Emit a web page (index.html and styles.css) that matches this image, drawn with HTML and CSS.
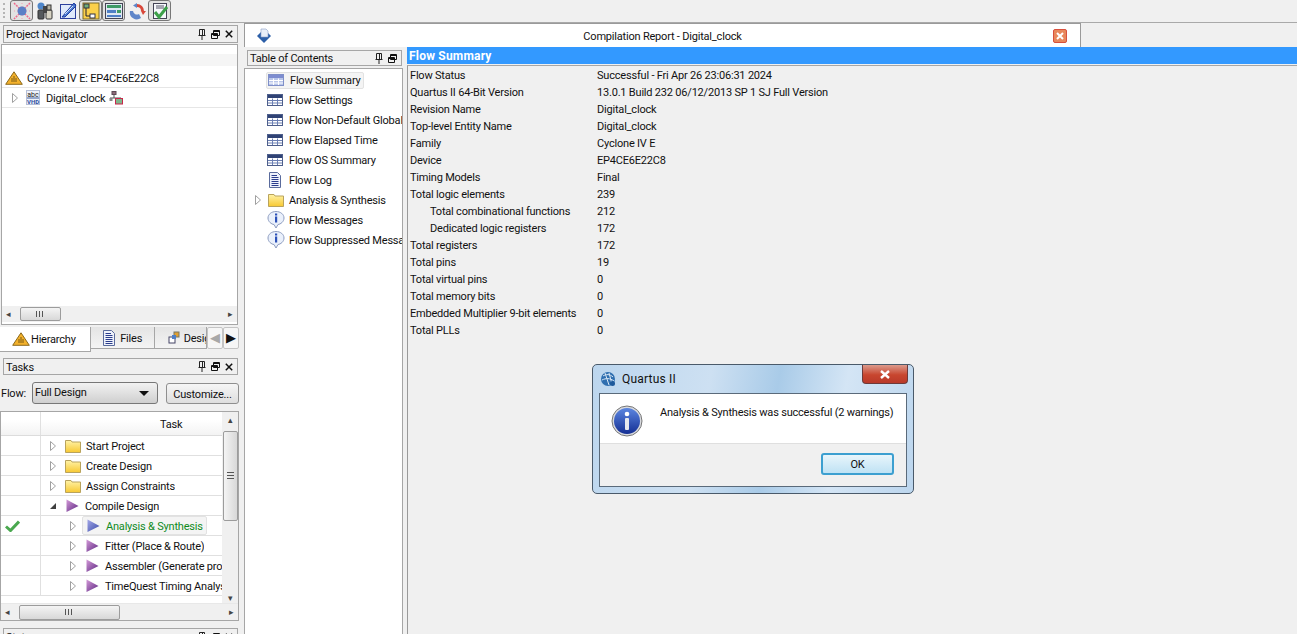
FILE: index.html
```html
<!DOCTYPE html>
<html lang="en">
<head>
    <meta charset="UTF-8">
    <title>Quartus II - Compilation Report</title>
    <link rel="stylesheet" href="styles.css">
</head>
<body>
    <svg class="defs" width="0" height="0">
        <defs>
            <linearGradient id="gFolder" x1="0" y1="0" x2="0" y2="1"><stop offset="0" stop-color="#fff3a8"/><stop offset="1" stop-color="#f7c832"/></linearGradient>
            <linearGradient id="gPlay" x1="0" y1="0" x2="1" y2="1"><stop offset="0" stop-color="#d49ad8"/><stop offset="1" stop-color="#5a2480"/></linearGradient>
            <linearGradient id="gPlayBlue" x1="0" y1="0" x2="1" y2="1"><stop offset="0" stop-color="#a3a8e8"/><stop offset="1" stop-color="#3a4aa8"/></linearGradient>
            <linearGradient id="gInfo" x1="0" y1="0" x2="0" y2="1"><stop offset="0" stop-color="#5c86e0"/><stop offset="1" stop-color="#142f94"/></linearGradient>
            <symbol id="i-exp" viewBox="0 0 8 10"><path d="M1.500 .5 6.500 5 1.500 9.500z" fill="#fff" stroke="#a0a0a0"/></symbol>
            <symbol id="i-exp-open" viewBox="0 0 8 10"><path d="M1 8 7 8 7 2z" fill="#404040"/></symbol>
            <symbol id="i-folder" viewBox="0 0 16 14"><path d="M.5 3V1.500H6L7 3H15.500V13.500H.5z" fill="url(#gFolder)" stroke="#b9a35c"/></symbol>
            <symbol id="i-play" viewBox="0 0 14 14"><path d="M1.500 .5 13.500 7 1.500 13z" fill="url(#gPlay)"/></symbol>
            <symbol id="i-play-blue" viewBox="0 0 14 14"><path d="M1.500 .5 13.500 7 1.500 13z" fill="url(#gPlayBlue)"/></symbol>
            <symbol id="i-table" viewBox="0 0 16 12">
                <rect x=".5" y=".5" width="15" height="11" fill="#fff" stroke="#4e5f8c"/>
                <rect x="1" y="1" width="14" height="3" fill="#2f4274"/>
                <path d="M1 6.500H15M1 9H15M5.500 4.500V11M10.500 4.500V11" stroke="#6d80b4"/>
            </symbol>
            <symbol id="i-table-sel" viewBox="0 0 16 12">
                <rect x=".5" y=".5" width="15" height="11" fill="#b9c6ea" stroke="#7f8fc8"/>
                <rect x="1" y="1" width="14" height="3" fill="#7d8cd0"/>
                <path d="M1 6.500H15M1 9H15M5.500 4.500V11M10.500 4.500V11" stroke="#fff"/>
            </symbol>
            <symbol id="i-doc" viewBox="0 0 12 16">
                <path d="M.5 .5H8.500L11.500 3.500V15.500H.5z" fill="#eef2fb" stroke="#5a6b9c"/>
                <path d="M2.500 3.500H8M2.500 5.500H9.500M2.500 7.500H9.500M2.500 9.500H9.500M2.500 11.500H9.500M2.500 13.500H9.500" stroke="#2a3c8c"/>
            </symbol>
            <symbol id="i-info" viewBox="0 0 18 18">
                <path d="M9 .5C13.500 .5 17 3.300 17 7S13.500 13.300 11 13.500L9 17 7 13.500C4.500 13.300 1 10.700 1 7S4.500 .5 9 .5z" fill="#eaf0fb" stroke="#8d9cc0"/>
                <rect x="8" y="2.500" width="2.200" height="2" fill="#2c50b8"/>
                <rect x="8" y="5.500" width="2.200" height="6" fill="#2c50b8"/>
            </symbol>
            <symbol id="i-warn" viewBox="0 0 18 14">
                <path d="M9 .8 17.300 13.300H.7z" fill="#f3b12b" stroke="#8c6a1d"/>
                <path d="M7 11V7M9 11V5M11 11V7" stroke="#7a5a14"/>
            </symbol>
            <symbol id="i-pin" viewBox="0 0 8 11"><path d="M1.500 .5H6.500V6.500H1.500zM.5 6.500H7.500M4 7V11M4.500 1V6" fill="none" stroke="#222"/></symbol>
            <symbol id="i-float" viewBox="0 0 9 9"><path d="M2.500 .5H8.500V5.500H2.500zM2.500 1.500H8.500M.5 3.500H6.500V8.500H.5zM.5 4.500H6.500" fill="#f0f0f0" stroke="#111"/></symbol>
            <symbol id="i-close" viewBox="0 0 8 8"><path d="M.8 .8 7.200 7.200M7.200 .8 .8 7.200" stroke="#111" stroke-width="1.500"/></symbol>
        </defs>
    </svg>

    <div class="toolbar">
        <span class="grip"></span>
        <span class="tool tool-on">
            <svg width="18" height="18" viewBox="0 0 18 18"><path d="M1 1 17 17M17 1 1 17" stroke="#ef6a8c" stroke-width="1.500" stroke-dasharray="2 1"/><path d="M9 1V17M1 9H17" stroke="#f4a0b4" stroke-dasharray="1 2"/><circle cx="9" cy="9" r="4.500" fill="#5b7fc6"/></svg>
        </span>
        <span class="tool">
            <svg width="18" height="18" viewBox="0 0 18 18"><circle cx="5" cy="4" r="3.500" fill="#4f86c9"/><rect x="2" y="8" width="6" height="9" rx="1" fill="#55595c" stroke="#333"/><rect x="10" y="8" width="6" height="9" rx="1" fill="#d8d4c4" stroke="#333"/><rect x="7" y="4" width="4" height="7" fill="#444"/><rect x="11" y="3" width="4" height="5" fill="#b8b4a4" stroke="#333"/></svg>
        </span>
        <span class="tool">
            <svg width="18" height="18" viewBox="0 0 18 18"><rect x="1.500" y="2.500" width="15" height="14" fill="#dfe9fa" stroke="#2b3f9c"/><path d="M3 15 15 1 17 4 6 15z" fill="#4d7cd0" stroke="#1d3aa0"/><path d="M6 12 14 4" stroke="#cfe0fa"/></svg>
        </span>
        <span class="tool tool-on">
            <svg width="18" height="18" viewBox="0 0 18 18"><rect x="1" y="1" width="16" height="16" fill="#fbd04a" stroke="#7a6a28"/><rect x="2" y="2" width="5" height="4" fill="#6fae78" stroke="#334"/><rect x="8" y="12" width="5" height="4" fill="#fff" stroke="#334"/><path d="M4 6V14H8" fill="none" stroke="#223"/></svg>
        </span>
        <span class="tool tool-on">
            <svg width="18" height="18" viewBox="0 0 18 18"><rect x=".5" y="1.500" width="17" height="15" fill="#dfe8f2" stroke="#445"/><rect x="2" y="3" width="14" height="3" fill="#3f9a66"/><rect x="2" y="8" width="9" height="3" fill="#4f7fc6"/><rect x="12" y="8" width="4" height="3" fill="#3f9a66"/><rect x="2" y="13" width="14" height="2" fill="#4f7fc6"/></svg>
        </span>
        <span class="tool">
            <svg width="18" height="18" viewBox="0 0 18 18"><path d="M9 2A7 7 0 0 1 16 9L13 9A4 4 0 0 0 9 5z" fill="#d9483b"/><path d="M13 16A7 7 0 0 1 2 9L5 9A4 4 0 0 0 11 12z" fill="#5f86c9"/><path d="M9 1 5 3.500 9 6z" fill="#5f86c9"/><path d="M13 9H18L15 13z" fill="#d9483b"/></svg>
        </span>
        <span class="tool tool-on">
            <svg width="18" height="18" viewBox="0 0 18 18"><rect x="2.500" y="1.500" width="13" height="15" fill="#f6f8fc" stroke="#445"/><path d="M5 4H13M5 6H13" stroke="#556"/><path d="M4 10 8 15 16 5" fill="none" stroke="#3da04a" stroke-width="3"/></svg>
        </span>
    </div>

    <div class="workspace">
        <aside class="side">
            <div class="dock-head nav-head">
                <span class="dock-title">Project Navigator</span>
                <span class="dock-btns">
                    <svg class="pin"><use href="#i-pin"/></svg>
                    <svg class="flt"><use href="#i-float"/></svg>
                    <svg class="cls"><use href="#i-close"/></svg>
                </span>
            </div>
            <div class="nav-box">
                <div class="nav-strip"></div>
                <div class="nav-row nav-device">
                    <svg class="warn"><use href="#i-warn"/></svg>
                    <span class="lbl">Cyclone IV E: EP4CE6E22C8</span>
                </div>
                <div class="nav-row nav-entity">
                    <svg class="exp"><use href="#i-exp"/></svg>
                    <svg class="vhd" width="14" height="15" viewBox="0 0 14 15">
                        <rect x=".5" y=".5" width="13" height="14" fill="#eef2fa" stroke="#b4bed6"/>
                        <text x="7" y="6.500" font-size="7" text-anchor="middle" fill="#222">abc</text>
                        <path d="M1 8H13" stroke="#3f5f9f"/>
                        <text x="7" y="14" font-size="6" font-weight="700" text-anchor="middle" fill="#2f4fa0">VHD</text>
                    </svg>
                    <span class="lbl">Digital_clock</span>
                    <svg class="hier" width="15" height="14" viewBox="0 0 15 14">
                        <rect x="3" y=".5" width="4" height="3" fill="#8d6a78" stroke="#5c4a55"/>
                        <path d="M5 4V7M1 7H12" stroke="#555"/>
                        <rect x=".5" y="7" width="3" height="3" fill="#888"/>
                        <rect x="6.500" y="7.500" width="7" height="5.500" fill="#7fb58c" stroke="#c8264a"/>
                    </svg>
                </div>
                <div class="grow"></div>
                <div class="hscroll nav-hscroll">
                    <span class="sarrow">◂</span>
                    <span class="sthumb nav-thumb"></span>
                    <span class="grow"></span>
                    <span class="sarrow">▸</span>
                </div>
            </div>
            <div class="tabs">
                <span class="tab tab-active"><svg class="warn"><use href="#i-warn"/></svg><span class="lbl">Hierarchy</span></span>
                <span class="tab tab-files"><svg class="tab-doc"><use href="#i-doc"/></svg><span class="lbl">Files</span></span>
                <span class="tab tab-clip">
                    <svg width="13" height="13" viewBox="0 0 13 13"><rect x="6" y="1" width="5" height="5" fill="#e0a030" stroke="#776"/><rect x="1" y="6" width="6" height="6" fill="#fff" stroke="#446"/><rect x="4" y="4" width="4" height="4" fill="#4f7fc6"/></svg>
                    <span class="lbl">Design Units</span>
                </span>
                <span class="tab-nav tab-nav-off">◀</span>
                <span class="tab-nav">▶</span>
            </div>

            <div class="dock-head tasks-head">
                <span class="dock-title">Tasks</span>
                <span class="dock-btns">
                    <svg class="pin"><use href="#i-pin"/></svg>
                    <svg class="flt"><use href="#i-float"/></svg>
                    <svg class="cls"><use href="#i-close"/></svg>
                </span>
            </div>
            <div class="flow-row">
                <span class="lbl">Flow:</span>
                <span class="combo">Full Design<i class="combo-arrow"></i></span>
                <span class="btn-custom">Customize...</span>
            </div>

            <div class="task-box">
                <div class="task-main">
                    <div class="task-list">
                        <div class="task-head"><span class="task-check"></span><span class="task-title">Task</span></div>
                        <div class="task-row"><span class="task-check"></span><span class="task-cell lvl1"><svg class="exp"><use href="#i-exp"/></svg><svg class="ico16"><use href="#i-folder"/></svg><span class="lbl">Start Project</span></span></div>
                        <div class="task-row"><span class="task-check"></span><span class="task-cell lvl1"><svg class="exp"><use href="#i-exp"/></svg><svg class="ico16"><use href="#i-folder"/></svg><span class="lbl">Create Design</span></span></div>
                        <div class="task-row"><span class="task-check"></span><span class="task-cell lvl1"><svg class="exp"><use href="#i-exp"/></svg><svg class="ico16"><use href="#i-folder"/></svg><span class="lbl">Assign Constraints</span></span></div>
                        <div class="task-row"><span class="task-check"></span><span class="task-cell lvl1"><svg class="exp"><use href="#i-exp-open"/></svg><svg class="ico16 play"><use href="#i-play"/></svg><span class="lbl">Compile Design</span></span></div>
                        <div class="task-row">
                            <span class="task-check"><svg width="15" height="12" viewBox="0 0 15 12"><path d="M1 6.500 5.500 10.500 14 1.500" fill="none" stroke="#4aa84f" stroke-width="3"/></svg></span>
                            <span class="task-cell lvl2"><svg class="exp"><use href="#i-exp"/></svg><span class="task-sel"><svg class="ico16 play"><use href="#i-play-blue"/></svg><span class="lbl">Analysis &amp; Synthesis</span></span></span>
                        </div>
                        <div class="task-row"><span class="task-check"></span><span class="task-cell lvl2"><svg class="exp"><use href="#i-exp"/></svg><svg class="ico16 play"><use href="#i-play"/></svg><span class="lbl">Fitter (Place &amp; Route)</span></span></div>
                        <div class="task-row"><span class="task-check"></span><span class="task-cell lvl2"><svg class="exp"><use href="#i-exp"/></svg><svg class="ico16 play"><use href="#i-play"/></svg><span class="lbl">Assembler (Generate programming files)</span></span></div>
                        <div class="task-row"><span class="task-check"></span><span class="task-cell lvl2"><svg class="exp"><use href="#i-exp"/></svg><svg class="ico16 play"><use href="#i-play"/></svg><span class="lbl">TimeQuest Timing Analysis</span></span></div>
                    </div>
                    <div class="vscroll">
                        <span class="sarrow">▴</span>
                        <span class="vthumb"></span>
                        <span class="grow"></span>
                        <span class="sarrow">▾</span>
                    </div>
                </div>
                <div class="hscroll task-hscroll">
                    <span class="sarrow">◂</span>
                    <span class="sthumb task-thumb"></span>
                    <span class="grow"></span>
                    <span class="sarrow">▸</span>
                </div>
            </div>

            <div class="dock-head status-head">
                <span class="dock-title">Status</span>
                <span class="dock-btns">
                    <svg class="pin"><use href="#i-pin"/></svg>
                    <svg class="flt"><use href="#i-float"/></svg>
                    <svg class="cls"><use href="#i-close"/></svg>
                </span>
            </div>
        </aside>

        <main class="report">
            <div class="report-title">
                <svg class="report-ico" width="16" height="16" viewBox="0 0 16 16"><path d="M8 15 1 8 8 1 15 8z" fill="#2c5fa8"/><path d="M5 1H10L12 3V9H5z" fill="#e8eef8" stroke="#8aa0c8" stroke-width=".6"/></svg>
                <span class="report-name">Compilation Report - Digital_clock</span>
                <span class="report-close"><svg width="8" height="8" viewBox="0 0 8 8"><path d="M1 1 7 7M7 1 1 7" stroke="#fff" stroke-width="2"/></svg></span>
            </div>
            <div class="report-body">
                <section class="toc">
                    <div class="dock-head toc-head">
                        <span class="dock-title">Table of Contents</span>
                        <span class="dock-btns">
                            <svg class="pin"><use href="#i-pin"/></svg>
                            <svg class="flt"><use href="#i-float"/></svg>
                        </span>
                    </div>
                    <div class="toc-list">
                        <div class="toc-row"><span class="toc-sel"><svg class="ico-table"><use href="#i-table-sel"/></svg><span class="lbl">Flow Summary</span></span></div>
                        <div class="toc-row"><svg class="ico-table"><use href="#i-table"/></svg><span class="lbl">Flow Settings</span></div>
                        <div class="toc-row"><svg class="ico-table"><use href="#i-table"/></svg><span class="lbl">Flow Non-Default Global Settings</span></div>
                        <div class="toc-row"><svg class="ico-table"><use href="#i-table"/></svg><span class="lbl">Flow Elapsed Time</span></div>
                        <div class="toc-row"><svg class="ico-table"><use href="#i-table"/></svg><span class="lbl">Flow OS Summary</span></div>
                        <div class="toc-row"><svg class="ico-doc"><use href="#i-doc"/></svg><span class="lbl">Flow Log</span></div>
                        <div class="toc-row toc-folder"><svg class="exp"><use href="#i-exp"/></svg><svg class="ico16"><use href="#i-folder"/></svg><span class="lbl">Analysis &amp; Synthesis</span></div>
                        <div class="toc-row"><svg class="ico-info"><use href="#i-info"/></svg><span class="lbl">Flow Messages</span></div>
                        <div class="toc-row"><svg class="ico-info"><use href="#i-info"/></svg><span class="lbl">Flow Suppressed Messages</span></div>
                    </div>
                </section>
                <section class="summary">
                    <div class="summary-head">Flow Summary</div>
                    <div class="summary-table">
                        <div class="sum-row"><span>Flow Status</span><span>Successful - Fri Apr 26 23:06:31 2024</span></div>
                        <div class="sum-row"><span>Quartus II 64-Bit Version</span><span>13.0.1 Build 232 06/12/2013 SP 1 SJ Full Version</span></div>
                        <div class="sum-row"><span>Revision Name</span><span>Digital_clock</span></div>
                        <div class="sum-row"><span>Top-level Entity Name</span><span>Digital_clock</span></div>
                        <div class="sum-row"><span>Family</span><span>Cyclone IV E</span></div>
                        <div class="sum-row"><span>Device</span><span>EP4CE6E22C8</span></div>
                        <div class="sum-row"><span>Timing Models</span><span>Final</span></div>
                        <div class="sum-row"><span>Total logic elements</span><span>239</span></div>
                        <div class="sum-row sum-sub"><span>Total combinational functions</span><span>212</span></div>
                        <div class="sum-row sum-sub"><span>Dedicated logic registers</span><span>172</span></div>
                        <div class="sum-row"><span>Total registers</span><span>172</span></div>
                        <div class="sum-row"><span>Total pins</span><span>19</span></div>
                        <div class="sum-row"><span>Total virtual pins</span><span>0</span></div>
                        <div class="sum-row"><span>Total memory bits</span><span>0</span></div>
                        <div class="sum-row"><span>Embedded Multiplier 9-bit elements</span><span>0</span></div>
                        <div class="sum-row"><span>Total PLLs</span><span>0</span></div>
                    </div>
                </section>
            </div>
        </main>
    </div>

    <div class="dialog">
        <div class="dialog-bar">
            <svg width="16" height="16" viewBox="0 0 16 16"><circle cx="8" cy="8" r="7" fill="#2f6fb0"/><path d="M3 5C6 3 10 3 13 6M2 9C6 7 10 7 14 10M5 2 9 14M9 2 12 13" stroke="#d8e6f4" fill="none"/><circle cx="12.500" cy="12.500" r="2.500" fill="#1e5a9c"/></svg>
            <span class="dialog-title">Quartus II</span>
            <span class="dialog-close"><svg width="10" height="9" viewBox="0 0 10 9"><path d="M1 1 9 8M9 1 1 8" stroke="#fff" stroke-width="2.400"/></svg></span>
        </div>
        <div class="dialog-inner">
            <div class="dialog-msg">
                <svg class="dialog-info" width="32" height="32" viewBox="0 0 32 32">
                    <circle cx="16" cy="16" r="15" fill="#d8dadf" stroke="#777"/>
                    <circle cx="16" cy="16" r="13" fill="url(#gInfo)"/>
                    <rect x="14" y="13" width="4" height="12" rx="1" fill="#e6e8ef"/>
                    <circle cx="16" cy="9" r="2.300" fill="#fff"/>
                </svg>
                <span class="dialog-text">Analysis &amp; Synthesis was successful (2 warnings)</span>
            </div>
            <div class="dialog-foot"><span class="btn-ok">OK</span></div>
        </div>
    </div>
</body>
</html>
```

FILE: styles.css
```css
* {
    box-sizing: border-box;
}

body {
    margin: 0;
    width: 1297px;
    height: 634px;
    overflow: hidden;
    background-color: #f0f0f0;
    color: #111;
    font-family: Roboto, Arial, sans-serif;
    font-size: 11px;
    letter-spacing: -0.2px;
    line-height: 14px;
    position: relative;
}

svg {
    flex: none;
    display: block;
}

svg text {
    letter-spacing: 0;
}

.defs {
    position: absolute;
}

.grow {
    flex: 1;
}

/* nudges text down a pixel against the icon next to it */
.lbl {
    padding-top: 2px;
}

/* toolbar */
.toolbar {
    height: 23px;
    display: flex;
    align-items: flex-start;
    padding-left: 3px;
    border-bottom: 1px solid #a9a9a9;
}

.grip {
    width: 3px;
    height: 15px;
    margin: 3px 4px 0 0;
    border-left: 2px dotted #b5b5b5;
}

.tool {
    width: 23px;
    height: 21px;
    display: flex;
    align-items: center;
    justify-content: center;
}

.tool-on {
    border: 1px solid #777;
    border-radius: 3px;
    background-color: #e2e2e2;
}

/* main split */
.workspace {
    display: flex;
    height: 611px;
}

.side {
    width: 244px;
    padding: 2px 5px 0 0;
    overflow: hidden;
}

.dock-head {
    height: 18px;
    border: 1px solid #a6a6a6;
    display: flex;
    align-items: center;
    padding: 0 4px 0 2px;
    background-color: #f0f0f0;
}

.dock-title {
    flex: 1;
    padding-top: 2px;
    white-space: nowrap;
}

.dock-btns {
    display: flex;
    align-items: center;
    gap: 5px;
}

.pin {
    width: 8px;
    height: 11px;
}

.flt {
    width: 9px;
    height: 9px;
}

.cls {
    width: 8px;
    height: 8px;
}

.nav-head {
    margin: 0 0 0 3px;
    width: 235px;
}

.nav-box {
    margin: 1px 0 0 1px;
    width: 237px;
    height: 281px;
    border: 1px solid #a6a6a6;
    background-color: #fff;
    display: flex;
    flex-direction: column;
}

.nav-strip {
    height: 12px;
    margin-top: 9px;
    background-color: #f5f5f5;
}

.nav-row {
    height: 20px;
    display: flex;
    align-items: center;
    border-bottom: 1px solid #e6e6e6;
    white-space: nowrap;
}

.nav-device {
    margin-top: 2px;
    padding-left: 3px;
    gap: 4px;
}

.warn {
    width: 18px;
    height: 14px;
}

.exp {
    width: 8px;
    height: 10px;
}

.nav-entity {
    padding-left: 9px;
}

.vhd {
    margin: 0 6px 0 7px;
}

.hier {
    margin-left: 4px;
}

.hscroll {
    height: 16px;
    background-color: #f0f0f0;
    display: flex;
    align-items: center;
    padding: 0 4px;
}

.nav-hscroll {
    margin-bottom: 2px;
}

.sarrow {
    color: #444;
    font-size: 9px;
    line-height: 9px;
}

.sthumb {
    height: 14px;
    border: 1px solid #9c9c9c;
    border-radius: 2px;
    background-image: repeating-linear-gradient(90deg, #555 0, #555 1px, transparent 1px, transparent 3px), linear-gradient(#f4f4f4, #d8d8d8);
    background-size: 8px 6px, auto;
    background-position: center, 0 0;
    background-repeat: no-repeat;
}

.nav-thumb {
    width: 41px;
    margin-left: 9px;
}

/* bottom tabs */
.tabs {
    height: 25px;
    margin-top: 2px;
    display: flex;
    align-items: flex-start;
}

.tab {
    height: 22px;
    display: flex;
    align-items: center;
    gap: 3px;
    background-image: linear-gradient(#e4e4e4, #f4f4f4);
    border-right: 1px solid #a6a6a6;
    border-bottom: 1px solid #a6a6a6;
}

.tab-active {
    width: 92px;
    height: 25px;
    background-image: none;
    background-color: #fff;
    gap: 1px;
    padding-left: 12px;
}

.tab-doc {
    width: 12px;
    height: 16px;
}

.tab-files {
    width: 64px;
    padding-left: 12px;
    gap: 5px;
}

.tab-clip {
    width: 53px;
    overflow: hidden;
    white-space: nowrap;
    padding-left: 13px;
}

.tab-nav {
    width: 16px;
    height: 22px;
    border: 1px solid #c4c4c4;
    border-radius: 2px;
    text-align: center;
    line-height: 20px;
    font-size: 13px;
    background-color: #f6f6f6;
}

.tab-nav-off {
    color: #a8a8a8;
}

/* tasks */
.tasks-head {
    margin: 6px 0 0 3px;
    width: 235px;
    height: 17px;
}

.flow-row {
    height: 22px;
    margin-top: 7px;
    padding-left: 1px;
    display: flex;
    align-items: center;
    white-space: nowrap;
}

.combo {
    width: 126px;
    height: 22px;
    margin-left: 6px;
    border: 1px solid #777;
    border-radius: 3px;
    background-image: linear-gradient(#f2f2f2, #cfcfcf);
    padding: 3px 2px 0;
    position: relative;
}

.combo-arrow {
    position: absolute;
    right: 8px;
    top: 8px;
    border: 5px solid transparent;
    border-top: 5px solid #111;
    border-bottom: 0;
}

.btn-custom {
    width: 73px;
    height: 21px;
    margin-left: 8px;
    border: 1px solid #8f8f8f;
    border-radius: 3px;
    background-image: linear-gradient(#f6f6f6, #dedede);
    text-align: center;
    line-height: 21px;
}

.task-box {
    margin: 7px 0 0 0;
    width: 239px;
    height: 210px;
    border: 1px solid #a6a6a6;
    background-color: #fff;
    display: flex;
    flex-direction: column;
}

.task-main {
    flex: 1;
    display: flex;
    overflow: hidden;
}

.task-list {
    width: 222px;
    overflow: hidden;
}

.task-head {
    height: 24px;
    display: flex;
    background-image: linear-gradient(#ffffff 35%, #f3f3f3);
    border-bottom: 1px solid #dcdcdc;
}

.task-title {
    flex: 1;
    padding: 6px 0 0 119px;
}

.task-check {
    width: 40px;
    flex: none;
    border-right: 1px solid #e0e0e0;
    display: flex;
    align-items: center;
    padding-left: 4px;
}

.task-row {
    height: 20px;
    display: flex;
    border-bottom: 1px solid #e0e0e0;
    white-space: nowrap;
    overflow: hidden;
}

.task-cell {
    display: flex;
    align-items: center;
    overflow: hidden;
}

.task-cell .exp {
    margin-right: 8px;
}

.lvl1 {
    padding-left: 8px;
}

.lvl2 {
    padding-left: 28px;
}

.ico16 {
    width: 16px;
    height: 14px;
    margin-right: 5px;
}

.play {
    width: 14px;
    height: 14px;
    margin-right: 6px;
}

.task-sel {
    display: flex;
    align-items: center;
    height: 19px;
    margin-left: -3px;
    padding: 0 3px 0 3px;
    border: 1px solid #e2e2e2;
    border-radius: 2px;
    background-color: #f4f4f4;
    color: #0f8a1e;
}

.vscroll {
    width: 16px;
    background-color: #f0f0f0;
    display: flex;
    flex-direction: column;
    align-items: center;
    padding-top: 4px;
}

.vthumb {
    width: 15px;
    height: 90px;
    margin-top: 6px;
    border: 1px solid #9c9c9c;
    border-radius: 2px;
    background-image: repeating-linear-gradient(#555 0, #555 1px, transparent 1px, transparent 3px), linear-gradient(90deg, #f4f4f4, #d8d8d8);
    background-size: 7px 8px, auto;
    background-position: center, 0 0;
    background-repeat: no-repeat;
}

.task-hscroll {
    height: 17px;
    flex: none;
    border-top: 1px solid #e8e8e8;
    width: 100%;
}

.task-thumb {
    width: 101px;
    height: 15px;
    margin-left: 9px;
}

.status-head {
    margin: 7px 0 0 3px;
    width: 235px;
}

/* report window */
.report {
    flex: 1;
    min-width: 0;
}

.report-title {
    width: 837px;
    height: 24px;
    background-color: #fff;
    border: 1px solid #9a9a9a;
    border-width: 1px 1px 0 1px;
    display: flex;
    align-items: center;
    padding: 0 13px 0 11px;
}

.report-name {
    flex: 1;
    padding-top: 2px;
    text-align: center;
}

.report-close {
    width: 14px;
    height: 14px;
    border: 1px solid #d8503c;
    border-radius: 2px;
    background-color: #e8885c;
    display: flex;
    align-items: center;
    justify-content: center;
}

.report-body {
    display: flex;
    height: 587px;
}

.toc {
    width: 163px;
    display: flex;
    flex-direction: column;
}

.toc-head {
    margin: 3px 0 0 3px;
    width: 155px;
    height: 16px;
}

.toc-list {
    flex: 1;
    margin-top: 2px;
    background-color: #fff;
    border: 1px solid #a6a6a6;
    border-width: 1px 1px 0 1px;
    width: 159px;
    padding-top: 1px;
    overflow: hidden;
}

.toc-row {
    height: 20px;
    display: flex;
    align-items: center;
    padding-left: 22px;
    white-space: nowrap;
}

.ico-table {
    width: 16px;
    height: 12px;
    margin-right: 6px;
}

.ico-doc {
    width: 12px;
    height: 16px;
    margin: 0 8px 0 2px;
}

.ico-info {
    width: 18px;
    height: 18px;
    margin-right: 4px;
}

.toc-folder {
    padding-left: 9px;
}

.toc-folder .exp {
    margin-right: 6px;
}

.toc-sel {
    display: flex;
    align-items: center;
    height: 17px;
    margin-left: -1px;
    padding: 0 2px 0 1px;
    border: 1px solid #e2e2e2;
    border-radius: 2px;
    background-color: #f4f4f4;
}

.summary {
    flex: 1;
    min-width: 0;
}

.summary-head {
    height: 17px;
    background-color: #3399ff;
    color: #fff;
    font-weight: 700;
    font-size: 12px;
    letter-spacing: 0.2px;
    line-height: 19px;
    padding-left: 2px;
}

.summary-table {
    height: 570px;
    margin-top: 1px;
    padding-top: 1px;
    border-top: 1px solid #a6a6a6;
    border-left: 1px solid #9a9a9a;
}

.sum-row {
    height: 17px;
    display: grid;
    grid-template-columns: 187px 1fr;
    padding-left: 2px;
    line-height: 17px;
    white-space: nowrap;
}

.sum-sub span:first-child {
    padding-left: 20px;
}

/* message box */
.dialog {
    position: absolute;
    left: 592px;
    top: 364px;
    width: 322px;
    height: 130px;
    border: 1px solid #4a5a6a;
    border-radius: 5px;
    background-image: linear-gradient(100deg, #bcd6ee 0%, #cde0f2 35%, #a9cbe8 55%, #d4e5f5 75%, #bcd6ee 100%);
    padding: 0 6px 6px;
    display: flex;
    flex-direction: column;
}

.dialog-bar {
    height: 28px;
    display: flex;
    align-items: center;
    padding-left: 1px;
    gap: 6px;
}

.dialog-title {
    flex: 1;
    font-size: 12px;
    letter-spacing: 0.2px;
}

.dialog-close {
    width: 46px;
    height: 19px;
    margin: -9px -1px 0 0;
    border: 1px solid #6c3a3a;
    border-top: 0;
    border-radius: 0 0 4px 4px;
    background-image: linear-gradient(#dc9a8c, #c8462f 55%, #b93a2a);
    display: flex;
    align-items: center;
    justify-content: center;
}

.dialog-inner {
    flex: 1;
    border: 1px solid #5a6a7a;
    background-color: #f0f0f0;
    display: flex;
    flex-direction: column;
}

.dialog-msg {
    height: 50px;
    background-color: #fff;
    border-bottom: 1px solid #dfdfdf;
    display: flex;
    align-items: flex-start;
    padding: 11px 0 0 11px;
    white-space: nowrap;
}

.dialog-info {
    margin: 0 17px 0 0;
}

.dialog-text {
    padding-top: 1px;
}

.dialog-foot {
    flex: 1;
    display: flex;
    justify-content: flex-end;
    padding: 9px 12px 0 0;
}

.btn-ok {
    width: 73px;
    height: 22px;
    border: 2px solid #3c9fd0;
    border-radius: 3px;
    background-image: linear-gradient(#e8f5fb, #bfe2f4);
    text-align: center;
    line-height: 20px;
}
```
